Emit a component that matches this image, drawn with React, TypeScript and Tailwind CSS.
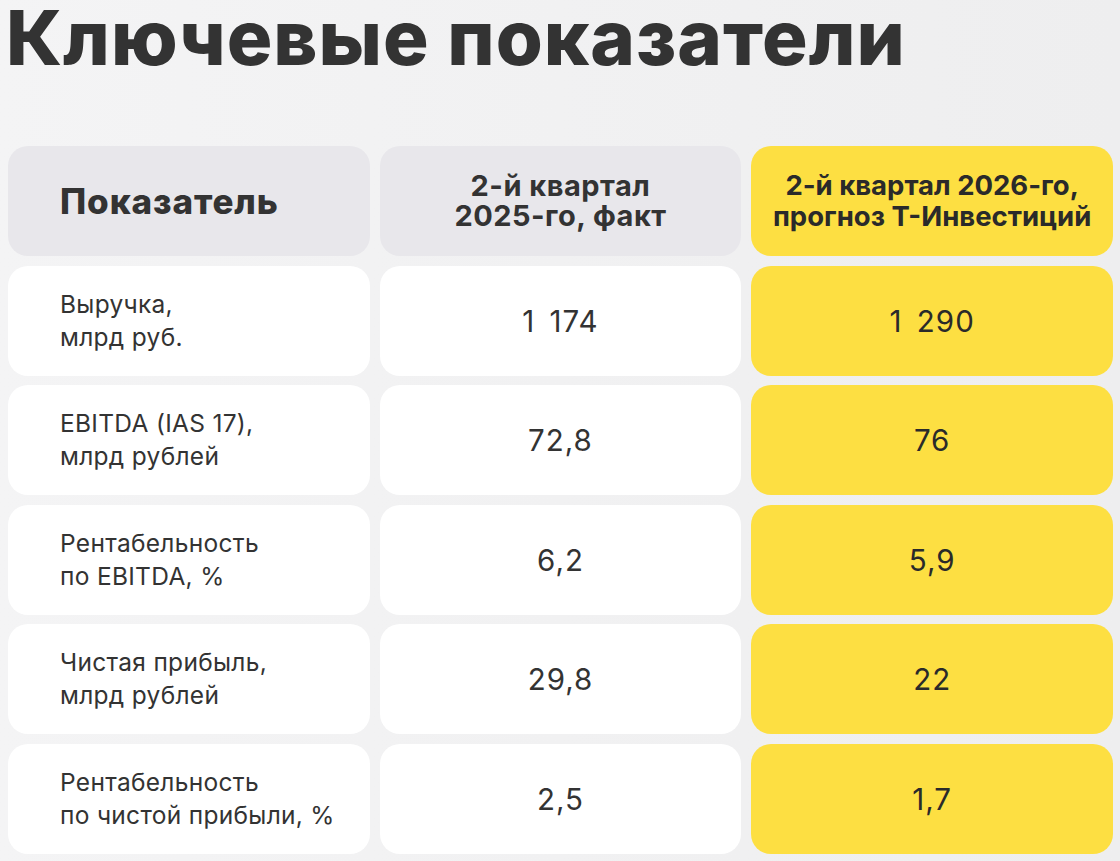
import React from "react";

const rows = [
  { label: ["Выручка,", "млрд руб."], a: "1 174", b: "1 290" },
  { label: ["EBITDA (IAS 17),", "млрд рублей"], a: "72,8", b: "76" },
  { label: ["Рентабельность", "по EBITDA, %"], a: "6,2", b: "5,9" },
  { label: ["Чистая прибыль,", "млрд рублей"], a: "29,8", b: "22" },
  { label: ["Рентабельность", "по чистой прибыли, %"], a: "2,5", b: "1,7" },
];

export default function App() {
  return (
    <div
      className="w-[1120px] h-[861px] overflow-hidden bg-gradient-to-r from-[#f4f4f5] to-[#eeeeef] text-[#333333]"
      style={{ fontFamily: "Inter, Roboto, 'Noto Sans', sans-serif" }}
    >
      <h1 className="pl-[6px] h-[75px] text-[76px] leading-[75px] font-extrabold tracking-[1px] text-[#333333] whitespace-nowrap">
        Ключевые показатели
      </h1>
      <div className="mt-[71px] pl-[8px] pr-[7px] grid grid-cols-3 gap-x-[10px] gap-y-[9.6px]">
        <div className="h-[110px] rounded-[20px] bg-[#e8e7eb] flex items-center pl-[52px]">
          <span className="text-[35px] font-extrabold leading-[36px] tracking-[0.9px]">Показатель</span>
        </div>
        <div className="h-[110px] rounded-[20px] bg-[#e8e7eb] flex items-center justify-center text-center">
          <span className="text-[29px] font-bold leading-[30px] tracking-[0.5px]">
            2-й квартал
            <br />
            2025-го, факт
          </span>
        </div>
        <div className="h-[110px] rounded-[20px] bg-[#fddf42] flex items-center justify-center text-center">
          <span className="text-[27.5px] font-bold leading-[31px] text-[#2a2a2a]">
            2-й квартал 2026-го,
            <br />
            прогноз Т-Инвестиций
          </span>
        </div>
        {rows.map((r, i) => (
          <React.Fragment key={i}>
            <div className="h-[110px] rounded-[20px] bg-white flex items-center pl-[52px]">
              <span className="text-[24.5px] leading-[33px] tracking-[0.3px]">
                {r.label[0]}
                <br />
                {r.label[1]}
              </span>
            </div>
            <div className="h-[110px] rounded-[20px] bg-white flex items-center justify-center">
              <span className="text-[29.5px] leading-[30px] tracking-[1px] [word-spacing:5px]">{r.a}</span>
            </div>
            <div className="h-[110px] rounded-[20px] bg-[#fddf42] flex items-center justify-center">
              <span className="text-[29.5px] leading-[30px] tracking-[1px] [word-spacing:5px] text-[#2a2a2a]">{r.b}</span>
            </div>
          </React.Fragment>
        ))}
      </div>
    </div>
  );
}
